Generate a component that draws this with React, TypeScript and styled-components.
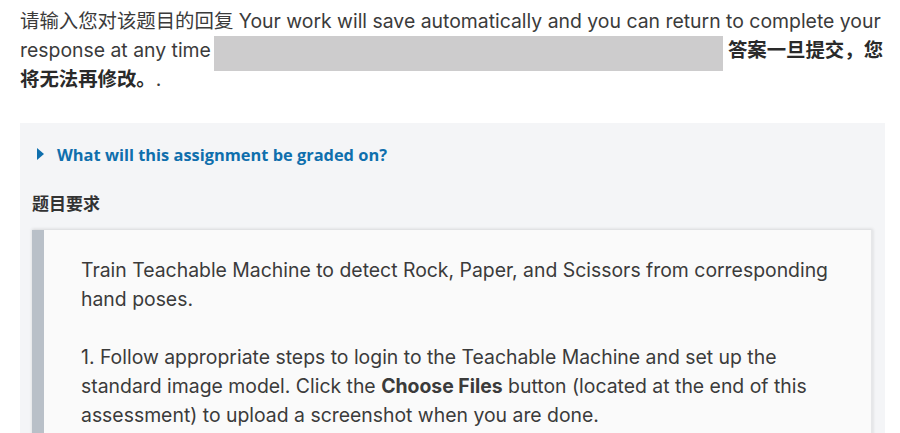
import React from 'react';
import styled, { createGlobalStyle } from 'styled-components';

const GlobalStyle = createGlobalStyle`
  body {
    margin: 0;
    background: #fff;
    font-family: Inter, "Noto Sans CJK SC", sans-serif;
    color: #3b3b3b;
  }
`;

const Page = styled.div`
  padding: 7px 15px 0 20px;
`;

const Intro = styled.p`
  margin: 0 0 29px;
  font-size: 19.4px;
  line-height: 29px;
`;

const Redacted = styled.span`
  display: inline-block;
  width: 509px;
  height: 35px;
  margin: 0 5px 0 3px;
  margin-bottom: -6px;
  vertical-align: top;
  background: #cdcccd;
`;

const Strong = styled.strong`
  font-weight: 700;
  color: #2a2a2a;
`;

const Panel = styled.section`
  width: 865px;
  box-sizing: border-box;
  background: #f4f5f7;
  padding: 20px 12px 12px;
`;

const Toggle = styled.div`
  display: flex;
  align-items: center;
  gap: 13px;
  padding-left: 5px;
  height: 22px;
  font-family: "Open Sans", sans-serif;
  font-weight: 700;
  font-size: 16.4px;
  color: #0f6fad;
`;

const Caret = styled.span`
  width: 0;
  height: 0;
  border-top: 6px solid transparent;
  border-bottom: 6px solid transparent;
  border-left: 7px solid #0f6fad;
`;

const Label = styled.h4`
  margin: 28px 0 0;
  font-size: 17px;
  line-height: 22px;
  font-weight: 700;
  color: #333;
`;

const Prompt = styled.div`
  margin-top: 15px;
  background: #fafafa;
  border-left: 12px solid #b9c0c8;
  border-right: 2px solid #e6e7e9;
  box-shadow: 0 -1px 3px rgba(0, 0, 0, 0.12);
  padding: 26px 30px 20px 37px;
  font-size: 19.4px;
  line-height: 29px;
  color: #3b3b3b;
`;

const Para = styled.p`
  margin: 0 0 29px;
`;

export default function App() {
  return (
    <>
      <GlobalStyle />
      <Page>
        <Intro>
          请输入您对该题目的回复 Your work will save automatically and you can return to complete your
          response at any time
          <Redacted />
          <Strong>答案一旦提交，您将无法再修改。</Strong>.
        </Intro>
        <Panel>
          <Toggle>
            <Caret />
            What will this assignment be graded on?
          </Toggle>
          <Label>题目要求</Label>
          <Prompt>
            <Para>
              Train Teachable Machine to detect Rock, Paper, and Scissors from corresponding hand poses.
            </Para>
            <Para>
              1. Follow appropriate steps to login to the Teachable Machine and set up the standard image
              model. Click the <b>Choose Files</b> button (located at the end of this assessment) to upload
              a screenshot when you are done.
            </Para>
          </Prompt>
        </Panel>
      </Page>
    </>
  );
}
